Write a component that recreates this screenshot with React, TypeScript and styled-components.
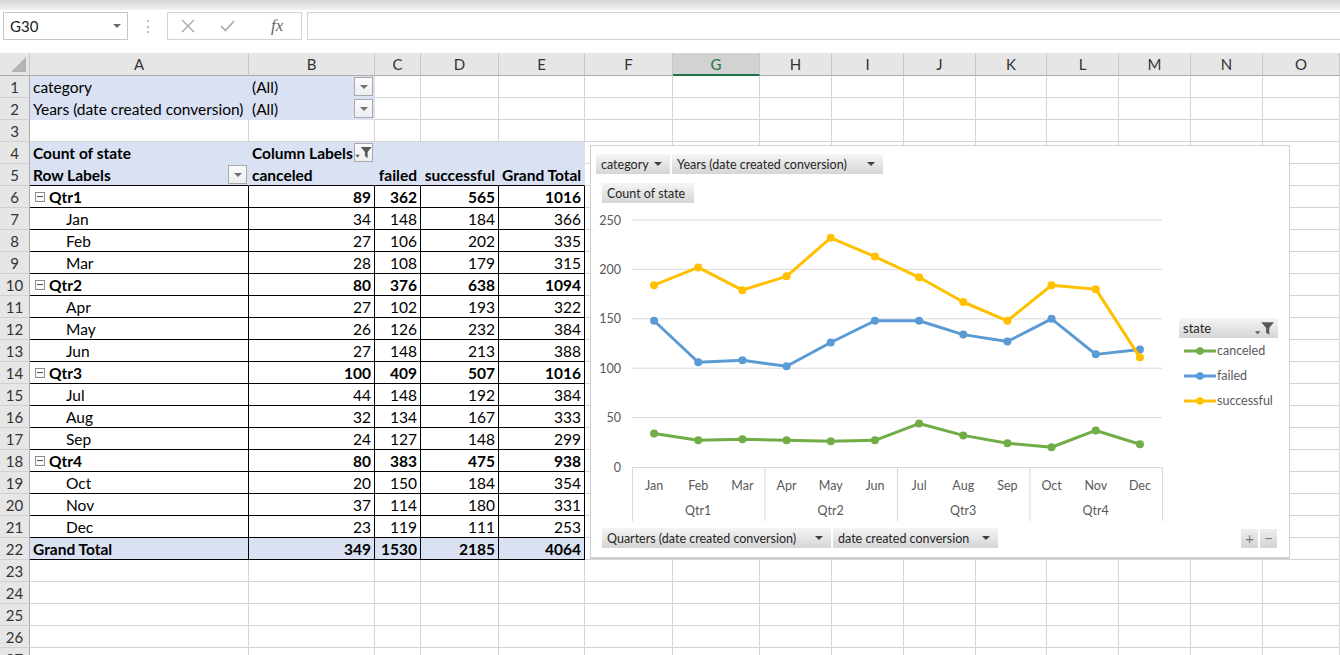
import React from 'react';
import styled, { createGlobalStyle } from 'styled-components';

const GlobalStyle = createGlobalStyle`
  html, body { margin: 0; padding: 0; background: #fff; }
  body { font-family: Lato, "Noto Sans", sans-serif; overflow: hidden; color: #000; }
`;

const COLS = ['A', 'B', 'C', 'D', 'E', 'F', 'G', 'H', 'I', 'J', 'K', 'L', 'M', 'N', 'O'];
const WIDTHS = [219, 126, 46, 78, 86, 88, 87, 72, 72, 72, 71, 72, 72, 72, 77];
const ACTIVE_COL = 'G';

type CellSpec = {
  text?: string;
  bold?: boolean;
  align?: 'right';
  tone?: 'blue';
  bb?: boolean;
  br?: boolean;
  button?: 'drop' | 'filter';
  toggle?: boolean;
  indent?: boolean;
};

const quarters = [
  { name: 'Qtr1', total: [89, 362, 565, 1016], months: [['Jan', 34, 148, 184, 366], ['Feb', 27, 106, 202, 335], ['Mar', 28, 108, 179, 315]] },
  { name: 'Qtr2', total: [80, 376, 638, 1094], months: [['Apr', 27, 102, 193, 322], ['May', 26, 126, 232, 384], ['Jun', 27, 148, 213, 388]] },
  { name: 'Qtr3', total: [100, 409, 507, 1016], months: [['Jul', 44, 148, 192, 384], ['Aug', 32, 134, 167, 333], ['Sep', 24, 127, 148, 299]] },
  { name: 'Qtr4', total: [80, 383, 475, 938], months: [['Oct', 20, 150, 184, 354], ['Nov', 37, 114, 180, 331], ['Dec', 23, 119, 111, 253]] },
];

const series = [
  { name: 'canceled', color: '#70ad47', values: [34, 27, 28, 27, 26, 27, 44, 32, 24, 20, 37, 23] },
  { name: 'failed', color: '#5b9bd5', values: [148, 106, 108, 102, 126, 148, 148, 134, 127, 150, 114, 119] },
  { name: 'successful', color: '#ffc000', values: [184, 202, 179, 193, 232, 213, 192, 167, 148, 184, 180, 111] },
];

const months = ['Jan', 'Feb', 'Mar', 'Apr', 'May', 'Jun', 'Jul', 'Aug', 'Sep', 'Oct', 'Nov', 'Dec'];

function pad(cells: CellSpec[]): CellSpec[] {
  return [...cells, ...Array.from({ length: COLS.length - cells.length }, () => ({}))];
}

function valueRow(label: string, values: (string | number)[], extra: CellSpec): CellSpec[] {
  const { toggle, indent, ...shared } = extra;
  return [
    { text: label, toggle, indent, bb: true, br: true, ...shared },
    ...values.map((v) => ({ text: String(v), align: 'right' as const, bb: true, br: true, ...shared })),
  ];
}

function buildRows(): CellSpec[][] {
  const rows: CellSpec[][] = [];
  rows.push(pad([{ text: 'category', tone: 'blue' }, { text: '(All)', tone: 'blue', button: 'drop' }]));
  rows.push(pad([{ text: 'Years (date created conversion)', tone: 'blue' }, { text: '(All)', tone: 'blue', button: 'drop' }]));
  rows.push(pad([]));
  rows.push(pad([
    { text: 'Count of state', tone: 'blue', bold: true },
    { text: 'Column Labels', tone: 'blue', bold: true, button: 'filter' },
    { tone: 'blue' }, { tone: 'blue' }, { tone: 'blue' },
  ]));
  rows.push(pad([
    { text: 'Row Labels', tone: 'blue', bold: true, button: 'drop', bb: true },
    { text: 'canceled', tone: 'blue', bold: true, bb: true },
    { text: 'failed', tone: 'blue', bold: true, bb: true, align: 'right' },
    { text: 'successful', tone: 'blue', bold: true, bb: true, align: 'right' },
    { text: 'Grand Total', tone: 'blue', bold: true, bb: true, align: 'right' },
  ]));
  quarters.forEach((q) => {
    rows.push(pad(valueRow(q.name, q.total, { bold: true, toggle: true })));
    q.months.forEach((m) => rows.push(pad(valueRow(String(m[0]), m.slice(1), { indent: true }))));
  });
  rows.push(pad(valueRow('Grand Total', [349, 1530, 2185, 4064], { bold: true, tone: 'blue' })));
  while (rows.length < 27) rows.push(pad([]));
  return rows;
}

const Window = styled.div`
  position: relative;
  width: 1340px;
  height: 655px;
  overflow: hidden;
  display: flex;
  flex-direction: column;
  background: #fff;
  & > * { flex-shrink: 0; }
`;

const TopStrip = styled.div`
  height: 10px;
  background: linear-gradient(#d6d6d6, #f1f1f1);
`;

const FormulaBar = styled.div`
  display: flex;
  align-items: center;
  height: 28px;
  margin: 2px 0 13px;
  padding-left: 3px;
`;

const NameBox = styled.div`
  box-sizing: border-box;
  width: 125px;
  height: 28px;
  border: 1px solid #c6c6c6;
  display: flex;
  align-items: center;
  justify-content: space-between;
  padding: 0 6px 0 6px;
  font-size: 15px;
  color: #222;
`;

const SmallCaret = styled.span<{ $color?: string }>`
  width: 0;
  height: 0;
  border-left: 4px solid transparent;
  border-right: 4px solid transparent;
  border-top: 4px solid ${(p) => p.$color || '#6b6b6b'};
`;

const Grip = styled.div`
  width: 39px;
  display: flex;
  justify-content: center;
  color: #b5b5b5;
  font-size: 16px;
`;

const FxBox = styled.div`
  box-sizing: border-box;
  width: 135px;
  height: 28px;
  border: 1px solid #d4d4d4;
  display: flex;
  align-items: center;
  padding-left: 13px;
  gap: 25px;
`;

const FxText = styled.span`
  font-family: "Liberation Serif", serif;
  font-style: italic;
  font-size: 17px;
  color: #666;
  margin-left: 11px;
`;

const FormulaInput = styled.div`
  box-sizing: border-box;
  flex: 1;
  height: 28px;
  margin-left: 5px;
  border: 1px solid #d4d4d4;
  border-right: none;
`;

const Sheet = styled.div`
  display: grid;
  grid-template-columns: 30px ${WIDTHS.map((w) => `${w}px`).join(' ')};
  grid-template-rows: 23px;
  grid-auto-rows: 22px;
`;

const Corner = styled.div`
  position: relative;
  box-sizing: border-box;
  background: #e6e6e6;
  border-right: 1px solid #c6c6c6;
  border-bottom: 1px solid #ababab;
  &::after {
    content: '';
    position: absolute;
    right: 3px;
    bottom: 3px;
    width: 15px;
    height: 15px;
    background: #b4b4b4;
    clip-path: polygon(100% 0, 100% 100%, 0 100%);
  }
`;

const ColHead = styled.div<{ $active?: boolean }>`
  box-sizing: border-box;
  display: flex;
  align-items: center;
  justify-content: center;
  font-size: 15px;
  color: ${(p) => (p.$active ? '#217346' : '#333')};
  background: ${(p) => (p.$active ? '#d2d2d2' : '#e6e6e6')};
  border-right: 1px solid #c6c6c6;
  border-bottom: ${(p) => (p.$active ? '2px solid #217346' : '1px solid #ababab')};
`;

const RowHead = styled.div`
  box-sizing: border-box;
  display: flex;
  align-items: center;
  justify-content: center;
  font-size: 15px;
  color: #333;
  background: #e6e6e6;
  border-right: 1px solid #ababab;
  border-bottom: 1px solid #d0d0d0;
`;

const BLUE = '#d9e1f2';
const GRID = '#d4d4d4';

const Cell = styled.div<{ $tone?: string; $bb?: boolean; $br?: boolean; $bold?: boolean; $align?: string; $indent?: boolean }>`
  box-sizing: border-box;
  display: flex;
  align-items: center;
  justify-content: ${(p) => (p.$align === 'right' ? 'flex-end' : 'flex-start')};
  padding: 0 3px 0 ${(p) => (p.$indent ? '36px' : '3px')};
  background: ${(p) => (p.$tone === 'blue' ? BLUE : '#fff')};
  border-right: 1px solid ${(p) => (p.$br ? '#000' : p.$tone === 'blue' ? BLUE : GRID)};
  border-bottom: 1px solid ${(p) => (p.$bb ? '#000' : p.$tone === 'blue' ? BLUE : GRID)};
  font-size: 15.5px;
  font-weight: ${(p) => (p.$bold ? 700 : 400)};
  white-space: nowrap;
  overflow: hidden;
  min-width: 0;
`;

const CellText = styled.span`
  overflow: hidden;
  flex: 0 1 auto;
`;

const DropButton = styled.span`
  box-sizing: border-box;
  flex: none;
  margin-left: auto;
  margin-right: -2px;
  width: 19px;
  height: 19px;
  border: 1px solid #a9a9a9;
  background: linear-gradient(#fbfbfb, #eceef1);
  display: flex;
  align-items: center;
  justify-content: center;
`;

const Toggle = styled.span`
  box-sizing: border-box;
  flex: none;
  width: 10px;
  height: 10px;
  border: 1px solid #8a8a8a;
  margin: 0 4px 0 2px;
  display: flex;
  align-items: center;
  justify-content: center;
  &::before {
    content: '';
    width: 6px;
    height: 1px;
    background: #444;
  }
`;

const Funnel = ({ size = 12, color = '#595959' }: { size?: number; color?: string }) => (
  <svg width={size + 6} height={size} viewBox="0 0 18 12">
    <path d="M0 8.5 H5 L2.5 11.5 Z" fill={color} />
    <path d="M6 0 H18 L13.5 5.5 V12 L10.5 10 V5.5 Z" fill={color} />
  </svg>
);

const ChartBox = styled.div`
  position: absolute;
  left: 590px;
  top: 145px;
  width: 700px;
  height: 414px;
  box-sizing: border-box;
  border: 1px solid #d0d0d0;
  border-bottom-width: 2px;
  background: #fff;
  display: flex;
  flex-direction: column;
`;

const FieldRow = styled.div<{ $top: number; $left: number }>`
  display: flex;
  gap: 2px;
  align-items: center;
  margin: ${(p) => p.$top}px 0 0 ${(p) => p.$left}px;
  height: 20px;
`;

const FieldButton = styled.div<{ $w: number }>`
  box-sizing: border-box;
  width: ${(p) => p.$w}px;
  height: 20px;
  padding: 0 8px 0 5px;
  display: flex;
  align-items: center;
  justify-content: space-between;
  background: linear-gradient(#f5f5f5, #d5d5d5);
  font-size: 12.5px;
  color: #262626;
  white-space: nowrap;
`;

const PlotRow = styled.div`
  display: flex;
  height: 322px;
`;

const Legend = styled.div`
  display: flex;
  flex-direction: column;
  margin: 115px 0 0 8px;
  width: 99px;
`;

const LegendHead = styled(FieldButton)`
  padding: 0 4px 0 4px;
  font-size: 13px;
`;

const LegendItem = styled.div`
  height: 25px;
  display: flex;
  align-items: center;
  gap: 1px;
  padding-left: 5px;
  font-size: 12.5px;
  color: #595959;
`;

const BottomRow = styled(FieldRow)`
  margin-right: 12px;
`;

const ZoomButtons = styled.div`
  margin-left: auto;
  display: flex;
  gap: 2px;
`;

const ZoomButton = styled.div`
  width: 17px;
  height: 19px;
  display: flex;
  align-items: center;
  justify-content: center;
  background: linear-gradient(#eeeeee, #d3d3d3);
  color: #7a7a7a;
  font-size: 15px;
`;

const PLOT = { left: 41, right: 571, base: 264, scale: 0.988 };
const step = (PLOT.right - PLOT.left) / 12;
const xAt = (i: number) => PLOT.left + step * (i + 0.5);
const yAt = (v: number) => PLOT.base - v * PLOT.scale;

const axisText = { fontFamily: 'Lato, sans-serif', fontSize: 12.5, fill: '#595959' };

const Plot = () => (
  <svg width={580} height={322}>
    {[50, 100, 150, 200, 250].map((v) => (
      <line key={v} x1={PLOT.left} x2={PLOT.right} y1={yAt(v)} y2={yAt(v)} stroke="#d9d9d9" strokeWidth={1} />
    ))}
    <line x1={PLOT.left} x2={PLOT.right} y1={PLOT.base + 0.5} y2={PLOT.base + 0.5} stroke="#d9d9d9" />
    {[0, 50, 100, 150, 200, 250].map((v) => (
      <text key={v} x={30} y={yAt(v) + 4.5} textAnchor="end" {...axisText}>{v}</text>
    ))}
    {[0, 1, 2, 3, 4].map((k) => (
      <line key={k} x1={PLOT.left + k * 3 * step + 0.5} x2={PLOT.left + k * 3 * step + 0.5} y1={PLOT.base} y2={318} stroke="#d9d9d9" />
    ))}
    {months.map((m, i) => (
      <text key={m} x={xAt(i)} y={287} textAnchor="middle" {...axisText}>{m}</text>
    ))}
    {['Qtr1', 'Qtr2', 'Qtr3', 'Qtr4'].map((q, k) => (
      <text key={q} x={PLOT.left + (k * 3 + 1.5) * step} y={312} textAnchor="middle" {...axisText}>{q}</text>
    ))}
    {series.map((s) => (
      <g key={s.name}>
        <polyline
          points={s.values.map((v, i) => `${xAt(i)},${yAt(v)}`).join(' ')}
          fill="none"
          stroke={s.color}
          strokeWidth={3}
          strokeLinejoin="round"
          strokeLinecap="round"
        />
        {s.values.map((v, i) => (
          <circle key={i} cx={xAt(i)} cy={yAt(v)} r={4} fill={s.color} />
        ))}
      </g>
    ))}
  </svg>
);

const Swatch = ({ color }: { color: string }) => (
  <svg width={32} height={10}>
    <line x1={0} x2={32} y1={5} y2={5} stroke={color} strokeWidth={3} />
    <circle cx={16} cy={5} r={3.8} fill={color} />
  </svg>
);

const PivotChart = () => (
  <ChartBox>
    <FieldRow $top={8} $left={5}>
      <FieldButton $w={74}>category<SmallCaret $color="#404040" /></FieldButton>
      <FieldButton $w={211}>Years (date created conversion)<SmallCaret $color="#404040" /></FieldButton>
    </FieldRow>
    <FieldRow $top={9} $left={11}>
      <FieldButton $w={92}>Count of state</FieldButton>
    </FieldRow>
    <PlotRow>
      <Plot />
      <Legend>
        <LegendHead $w={99}>state<Funnel size={13} /></LegendHead>
        {series.map((s) => (
          <LegendItem key={s.name}>
            <Swatch color={s.color} />
            {s.name}
          </LegendItem>
        ))}
      </Legend>
    </PlotRow>
    <BottomRow $top={3} $left={11}>
      <FieldButton $w={229}>Quarters (date created conversion)<SmallCaret $color="#404040" /></FieldButton>
      <FieldButton $w={165}>date created conversion<SmallCaret $color="#404040" /></FieldButton>
      <ZoomButtons>
        <ZoomButton>+</ZoomButton>
        <ZoomButton>−</ZoomButton>
      </ZoomButtons>
    </BottomRow>
  </ChartBox>
);

const rows = buildRows();

export default function App() {
  return (
    <Window>
      <GlobalStyle />
      <TopStrip />
      <FormulaBar>
        <NameBox>G30<SmallCaret /></NameBox>
        <Grip>⋮</Grip>
        <FxBox>
          <svg width={14} height={14} viewBox="0 0 14 14">
            <path d="M1 1 L13 13 M13 1 L1 13" stroke="#a8a8a8" strokeWidth={1.4} />
          </svg>
          <svg width={15} height={12} viewBox="0 0 15 12">
            <path d="M1 6 L5.5 10.5 L14 1" stroke="#a8a8a8" strokeWidth={1.6} fill="none" />
          </svg>
          <FxText>fx</FxText>
        </FxBox>
        <FormulaInput />
      </FormulaBar>
      <Sheet>
        <Corner />
        {COLS.map((c) => (
          <ColHead key={c} $active={c === ACTIVE_COL}>{c}</ColHead>
        ))}
        {rows.map((row, r) => (
          <React.Fragment key={r}>
            <RowHead>{r + 1}</RowHead>
            {row.map((cell, c) => (
              <Cell
                key={c}
                $tone={cell.tone}
                $bb={cell.bb}
                $br={cell.br}
                $bold={cell.bold}
                $align={cell.align}
                $indent={cell.indent}
              >
                {cell.toggle && <Toggle />}
                {cell.text && <CellText>{cell.text}</CellText>}
                {cell.button === 'drop' && (
                  <DropButton><SmallCaret $color="#707070" /></DropButton>
                )}
                {cell.button === 'filter' && (
                  <DropButton><Funnel size={11} /></DropButton>
                )}
              </Cell>
            ))}
          </React.Fragment>
        ))}
      </Sheet>
      <PivotChart />
    </Window>
  );
}
